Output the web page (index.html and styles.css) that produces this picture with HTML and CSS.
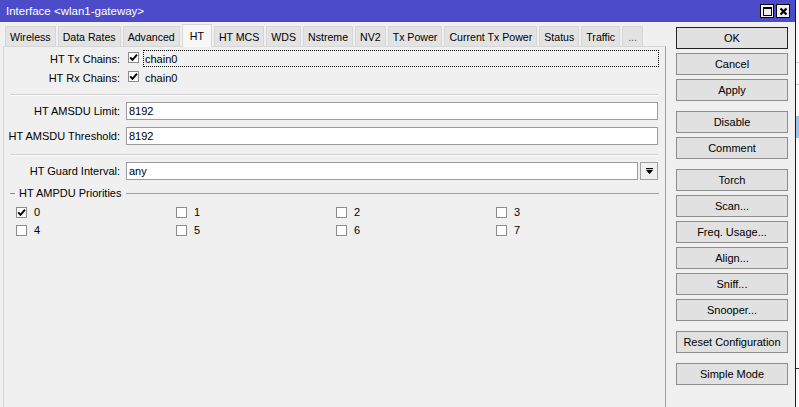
FILE: index.html
```html
<!DOCTYPE html>
<html>
<head>
<meta charset="utf-8">
<link rel="stylesheet" href="styles.css">
</head>
<body>
<div class="screen">
  <div class="window">
    <div class="titlebar">
      <span class="title">Interface &lt;wlan1-gateway&gt;</span>
      <div class="tb-btns">
        <span class="tb-btn"><svg width="11" height="11" viewBox="0 0 11 11"><rect x="1.5" y="1.5" width="8" height="8" fill="none" stroke="#000" stroke-width="1"/><rect x="1" y="1" width="9" height="2" fill="#000"/></svg></span>
        <span class="tb-btn"><svg width="11" height="11" viewBox="0 0 11 11"><path d="M2.5 2.5 L8.5 8.5 M8.5 2.5 L2.5 8.5" stroke="#000" stroke-width="2.2" fill="none"/></svg></span>
      </div>
    </div>
    <div class="body">
      <div class="main">
        <div class="tabs">
          <span class="tab">Wireless</span>
          <span class="tab">Data Rates</span>
          <span class="tab">Advanced</span>
          <span class="tab active">HT</span>
          <span class="tab">HT MCS</span>
          <span class="tab">WDS</span>
          <span class="tab">Nstreme</span>
          <span class="tab">NV2</span>
          <span class="tab">Tx Power</span>
          <span class="tab">Current Tx Power</span>
          <span class="tab">Status</span>
          <span class="tab">Traffic</span>
          <span class="tab more">...</span>
        </div>
        <div class="panel">
          <div class="crow">
            <span class="lbl">HT Tx Chains:</span>
            <span class="cb"><svg width="9" height="9" viewBox="0 0 9 9"><path d="M1.2 4.4 L3.5 6.9 L8 1.6" stroke="#000" stroke-width="1.9" fill="none"/></svg></span>
            <span class="ctext focus">chain0</span>
          </div>
          <div class="crow">
            <span class="lbl">HT Rx Chains:</span>
            <span class="cb"><svg width="9" height="9" viewBox="0 0 9 9"><path d="M1.2 4.4 L3.5 6.9 L8 1.6" stroke="#000" stroke-width="1.9" fill="none"/></svg></span>
            <span class="ctext">chain0</span>
          </div>
          <div class="sep sep1"></div>
          <div class="irow first">
            <span class="lbl">HT AMSDU Limit:</span>
            <span class="input">8192</span>
          </div>
          <div class="irow">
            <span class="lbl">HT AMSDU Threshold:</span>
            <span class="input">8192</span>
          </div>
          <div class="sep sep2"></div>
          <div class="irow first">
            <span class="lbl">HT Guard Interval:</span>
            <span class="input">any</span>
            <span class="select-btn"><svg width="7" height="7" viewBox="0 0 7 7"><rect x="0" y="0" width="7" height="1.2" fill="#000"/><polygon points="0,2 7,2 3.5,6.2" fill="#000"/></svg></span>
          </div>
          <div class="group">
            <span class="dash"></span>
            <span class="gtitle">HT AMPDU Priorities</span>
            <span class="gline"></span>
          </div>
          <div class="prios">
            <span class="prio"><span class="cb"><svg width="9" height="9" viewBox="0 0 9 9"><path d="M1.2 4.4 L3.5 6.9 L8 1.6" stroke="#000" stroke-width="1.9" fill="none"/></svg></span>0</span>
            <span class="prio"><span class="cb"></span>1</span>
            <span class="prio"><span class="cb"></span>2</span>
            <span class="prio"><span class="cb"></span>3</span>
            <span class="prio"><span class="cb"></span>4</span>
            <span class="prio"><span class="cb"></span>5</span>
            <span class="prio"><span class="cb"></span>6</span>
            <span class="prio"><span class="cb"></span>7</span>
          </div>
        </div>
      </div>
      <div class="actions">
        <div class="bgroup">
          <span class="btn default">OK</span>
          <span class="btn">Cancel</span>
          <span class="btn">Apply</span>
        </div>
        <div class="bgroup">
          <span class="btn">Disable</span>
          <span class="btn">Comment</span>
        </div>
        <div class="bgroup">
          <span class="btn">Torch</span>
          <span class="btn">Scan...</span>
          <span class="btn">Freq. Usage...</span>
          <span class="btn">Align...</span>
          <span class="btn">Sniff...</span>
          <span class="btn">Snooper...</span>
        </div>
        <div class="bgroup">
          <span class="btn">Reset Configuration</span>
        </div>
        <div class="bgroup">
          <span class="btn">Simple Mode</span>
        </div>
      </div>
    </div>
  </div>
  <div class="behind">
    <div class="behind-line l1"></div>
    <div class="behind-line l2"></div>
    <div class="behind-sel"></div>
    <div class="behind-line l3"></div>
  </div>
</div>
</body>
</html>
```

FILE: styles.css
```css
* { box-sizing: border-box; }
html, body {
  margin: 0;
  height: 100%;
  overflow: hidden;
  font-family: "Liberation Sans", Arial, sans-serif;
  font-size: 11px;
  color: #000;
}
.screen {
  display: flex;
  height: 407px;
  background: #fff;
}
.window {
  width: 796px;
  flex: none;
  display: flex;
  flex-direction: column;
  background: #f0f0f0;
  border-right: 1px solid #1a1a1a;
}
.titlebar {
  height: 22px;
  flex: none;
  background: #4c4ccb;
  color: #fff;
  display: flex;
  align-items: center;
  justify-content: space-between;
  padding: 0 5px 0 6px;
  font-size: 11.5px;
}
.tb-btns { display: flex; gap: 2px; }
.tb-btn {
  width: 14px;
  height: 14px;
  background: #f0f0f0;
  border: 1px solid #000;
  display: flex;
  align-items: center;
  justify-content: center;
}
.body {
  flex: 1;
  display: flex;
  min-height: 0;
}
.main {
  width: 666px;
  flex: none;
  display: flex;
  flex-direction: column;
}
.tabs {
  display: flex;
  align-items: flex-end;
  gap: 2px;
  height: 24px;
  padding-left: 5px;
  flex: none;
}
.tab {
  height: 20px;
  padding: 0 4px;
  background: #e3e3e3;
  border: 1px solid #d6d6d6;
  border-bottom: none;
  display: flex;
  align-items: center;
  white-space: nowrap;
  font-size: 10.6px;
}
.tab.more { padding: 0 5px; color: #555; }
.tab.active {
  height: 23px;
  margin-bottom: -1px;
  background: #f7f7f7;
  position: relative;
  z-index: 1;
  padding: 0 7px;
}
.panel {
  flex: 1;
  margin-left: 3px;
  width: 663px;
  border: 1px solid #d6d6d6;
  border-right-color: #a0a0a0;
  border-bottom: none;
  background: #f0f0f0;
  padding: 3px 7px 0 0;
}
.lbl {
  width: 116px;
  flex: none;
  text-align: right;
  margin-right: 6px;
  white-space: nowrap;
}
.crow {
  display: flex;
  align-items: center;
  height: 17px;
}
.crow + .crow { margin-top: 2px; }
.cb {
  width: 11px;
  height: 11px;
  flex: none;
  background: #fff;
  border: 1px solid #8c8c8c;
  display: flex;
  align-items: center;
  justify-content: center;
}
.crow .cb { margin-left: 2px; margin-top: -3px; }
.ctext {
  flex: 1;
  height: 17px;
  margin-left: 4px;
  padding-left: 1px;
  display: flex;
  align-items: center;
  border: 1px solid transparent;
}
.ctext.focus { border: 1px dotted #000; margin-right: -1px; }
.sep {
  height: 2px;
  margin-left: 6px;
  border-top: 1px solid #d2d2d2;
  border-bottom: 1px solid #fbfbfb;
}
.sep1 { margin-top: 8px; }
.sep2 { margin-top: 9px; }
.irow {
  display: flex;
  align-items: center;
  height: 18px;
  margin-top: 7px;
}
.irow.first { margin-top: 6px; }
.input {
  flex: 1;
  height: 18px;
  background: #fff;
  border: 1px solid #9c9c9c;
  padding-left: 2px;
  display: flex;
  align-items: center;
}
.select-btn {
  width: 18px;
  height: 18px;
  flex: none;
  margin-left: 2px;
  background: #f0f0f0;
  border: 1px solid #a0a0a0;
  display: flex;
  align-items: center;
  justify-content: center;
}
.group {
  display: flex;
  align-items: center;
  height: 12px;
  margin-top: 7px;
}
.dash {
  width: 5px;
  margin-left: 6px;
  border-top: 1px solid #8a8a8a;
}
.gtitle { margin-left: 4px; white-space: nowrap; }
.gline {
  flex: 1;
  margin-left: 5px;
  margin-right: -1px;
  border-top: 1px solid #a0a0a0;
}
.prios {
  display: grid;
  grid-template-columns: repeat(4, 160px);
  grid-auto-rows: 18px;
  padding-left: 12px;
  margin-top: 4px;
}
.prio {
  display: flex;
  align-items: center;
  gap: 7px;
}
.actions {
  width: 129px;
  flex: none;
  padding: 5px 0 0 10px;
  display: flex;
  flex-direction: column;
  gap: 10px;
}
.bgroup {
  display: flex;
  flex-direction: column;
  gap: 4px;
  width: 112px;
}
.btn {
  height: 22px;
  background: #e1e1e1;
  border: 1px solid #8e8e8e;
  display: flex;
  align-items: center;
  justify-content: center;
  white-space: nowrap;
}
.btn.default { border-color: #222; }
.behind {
  flex: 1;
  background: #fbfbfb;
  display: flex;
  flex-direction: column;
}
.behind-line {
  height: 1px;
  background: #c8c8c8;
}
.l1 { margin-top: 62px; }
.l2 { margin-top: 21px; }
.behind-sel {
  margin-top: 31px;
  height: 22px;
  background: #9cc3ec;
}
.l3 { margin-top: 230px; background: #333; }
```
